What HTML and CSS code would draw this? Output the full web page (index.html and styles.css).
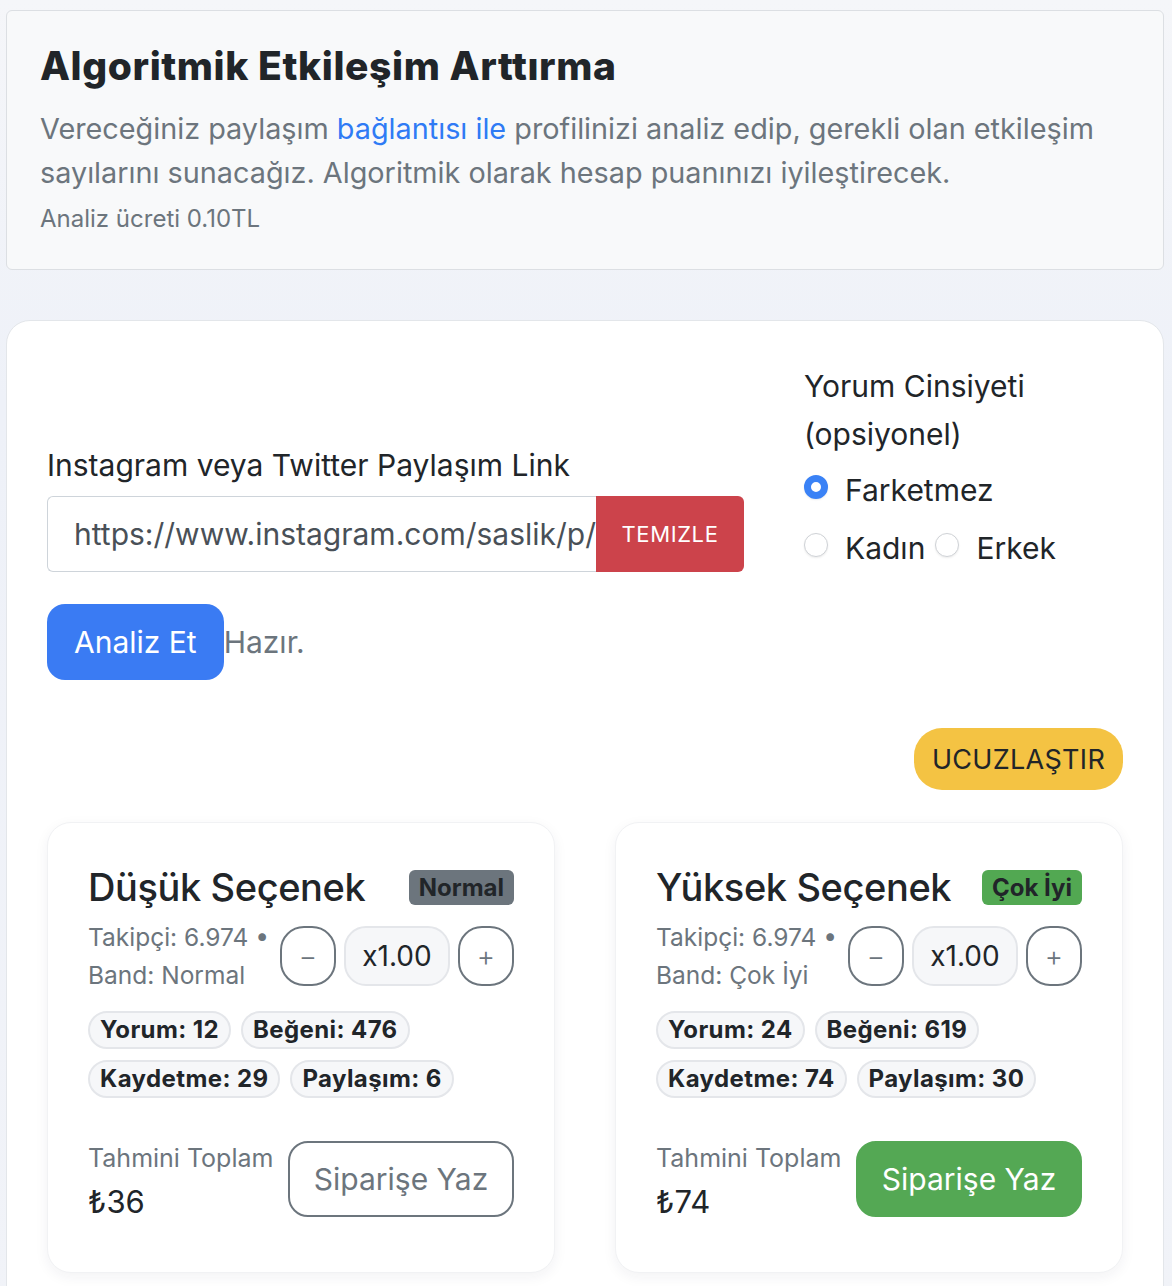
FILE: index.html
```html
<!DOCTYPE html>
<html lang="tr">
<head>
<meta charset="utf-8">
<title>Algoritmik Etkileşim Arttırma</title>
<link rel="stylesheet" href="styles.css">
</head>
<body>
<div class="page">
  <section class="intro">
    <h1 class="intro-title">Algoritmik Etkileşim Arttırma</h1>
    <p class="intro-lead">Vereceğiniz paylaşım <a href="#" class="intro-link">bağlantısı ile</a> profilinizi analiz edip, gerekli olan etkileşim sayılarını sunacağız. Algoritmik olarak hesap puanınızı iyileştirecek.</p>
    <p class="intro-fee">Analiz ücreti 0.10TL</p>
  </section>

  <section class="panel">
    <div class="form-row">
      <div class="link-field">
        <label class="field-label" for="post-link">Instagram veya Twitter Paylaşım Link</label>
        <div class="input-group">
          <input id="post-link" class="link-input" type="text" value="https://www.instagram.com/saslik/p/C3xAmPlE9k2/">
          <button class="btn-clear" type="button">TEMIZLE</button>
        </div>
      </div>
      <fieldset class="gender">
        <legend class="gender-title">Yorum Cinsiyeti (opsiyonel)</legend>
        <div class="radio-line">
          <label class="radio"><input type="radio" name="gender" checked><span>Farketmez</span></label>
        </div>
        <div class="radio-line">
          <label class="radio"><input type="radio" name="gender"><span>Kadın</span></label>
          <label class="radio"><input type="radio" name="gender"><span>Erkek</span></label>
        </div>
      </fieldset>
    </div>

    <div class="action-row">
      <button class="btn-analyze" type="button">Analiz Et</button>
      <span class="status">Hazır.</span>
    </div>

    <div class="discount-row">
      <button class="btn-discount" type="button">UCUZLAŞTIR</button>
    </div>

    <div class="options">
      <article class="option">
        <div class="option-head">
          <h2 class="option-title">Düşük Seçenek</h2>
          <span class="badge badge-normal">Normal</span>
        </div>
        <div class="option-meta">
          <p class="meta-text">Takipçi: 6.974 • Band: Normal</p>
          <div class="stepper">
            <button class="step-btn" type="button">&minus;</button>
            <span class="step-value">x1.00</span>
            <button class="step-btn" type="button">+</button>
          </div>
        </div>
        <ul class="chips">
          <li class="chip">Yorum: 12</li>
          <li class="chip">Beğeni: 476</li>
          <li class="chip">Kaydetme: 29</li>
          <li class="chip">Paylaşım: 6</li>
        </ul>
        <div class="option-foot">
          <div class="total">
            <span class="total-label">Tahmini Toplam</span>
            <span class="total-value">₺36</span>
          </div>
          <button class="btn-order" type="button">Siparişe Yaz</button>
        </div>
      </article>

      <article class="option">
        <div class="option-head">
          <h2 class="option-title">Yüksek Seçenek</h2>
          <span class="badge badge-good">Çok İyi</span>
        </div>
        <div class="option-meta">
          <p class="meta-text">Takipçi: 6.974 • Band: Çok İyi</p>
          <div class="stepper">
            <button class="step-btn" type="button">&minus;</button>
            <span class="step-value">x1.00</span>
            <button class="step-btn" type="button">+</button>
          </div>
        </div>
        <ul class="chips">
          <li class="chip">Yorum: 24</li>
          <li class="chip">Beğeni: 619</li>
          <li class="chip">Kaydetme: 74</li>
          <li class="chip">Paylaşım: 30</li>
        </ul>
        <div class="option-foot">
          <div class="total">
            <span class="total-label">Tahmini Toplam</span>
            <span class="total-value">₺74</span>
          </div>
          <button class="btn-order btn-order-primary" type="button">Siparişe Yaz</button>
        </div>
      </article>
    </div>
  </section>
</div>
</body>
</html>
```

FILE: styles.css
```css
* {
  box-sizing: border-box;
}

html,
body {
  margin: 0;
  padding: 0;
}

body {
  font-family: Inter, "Noto Sans", "DejaVu Sans", sans-serif;
  color: #212529;
  background: linear-gradient(180deg, #f5f6f9 0%, #eef1f8 30%, #f1f3f8 100%);
  min-height: 1286px;
}

.page {
  padding: 10px 8px 0 6px;
  display: flex;
  flex-direction: column;
  gap: 50px;
}

/* ---------- intro box ---------- */
.intro {
  background: #f8f9fa;
  border: 1px solid #dcdfe3;
  border-radius: 6px;
  padding: 32px 33px 35px;
}

.intro-title {
  margin: 0;
  font-size: 39px;
  line-height: 46px;
  font-weight: 800;
  letter-spacing: 0.6px;
  color: #212529;
}

.intro-lead {
  margin: 18px 0 0;
  font-size: 28.8px;
  line-height: 44px;
  color: #6c757d;
}

.intro-link {
  color: #2f7bf5;
  text-decoration: none;
}

.intro-fee {
  margin: 9px 0 0;
  font-size: 24px;
  line-height: 30px;
  color: #6c757d;
}

/* ---------- main panel ---------- */
.panel {
  background: #ffffff;
  border: 1px solid #e3e6ea;
  border-radius: 24px;
  padding: 41px 40px 60px;
}

.form-row {
  display: flex;
  align-items: flex-end;
  gap: 60px;
}

.link-field {
  width: 697px;
  flex: none;
}

.field-label {
  display: block;
  font-size: 30px;
  line-height: 40px;
  margin-bottom: 11px;
  color: #212529;
}

.input-group {
  display: flex;
  height: 76px;
}

.link-input {
  flex: 1;
  min-width: 0;
  height: 76px;
  border: 1px solid #ced4da;
  border-right: none;
  border-radius: 6px 0 0 6px;
  padding: 0 0 0 26px;
  font-family: inherit;
  font-size: 30px;
  color: #495057;
  background: #fff;
  outline: none;
}

.btn-clear {
  flex: none;
  width: 148px;
  border: none;
  border-radius: 0 6px 6px 0;
  background: #cc434b;
  color: #fff;
  font-family: inherit;
  font-size: 22px;
  letter-spacing: 0.6px;
}

.gender {
  border: none;
  margin: 0;
  padding: 0;
  min-width: 0;
}

.gender-title {
  padding: 0;
  font-size: 30px;
  line-height: 48px;
  width: 270px;
  color: #212529;
}

.radio-line {
  display: flex;
  align-items: center;
  gap: 10px;
  height: 48px;
  margin-top: 8px;
}

.radio-line + .radio-line {
  margin-top: 10px;
}

.radio {
  display: flex;
  align-items: center;
  gap: 17px;
  font-size: 30px;
  color: #212529;
}

.radio input {
  appearance: none;
  -webkit-appearance: none;
  margin: 0;
  width: 24px;
  height: 24px;
  border-radius: 50%;
  border: 1px solid #cfd2d6;
  background: #fff;
  box-shadow: 0 1px 2px rgba(0, 0, 0, 0.08);
  position: relative;
  top: -3px;
}

.radio input:checked {
  border: 7px solid #3a82f6;
  background: #fff;
}

/* ---------- actions ---------- */
.action-row {
  display: flex;
  align-items: center;
  margin-top: 32px;
}

.btn-analyze {
  height: 76px;
  padding: 0 27px;
  border: none;
  border-radius: 18px;
  background: #3a7bf3;
  color: #fff;
  font-family: inherit;
  font-size: 30px;
}

.status {
  font-size: 30px;
  color: #6c757d;
}

.discount-row {
  display: flex;
  justify-content: flex-end;
  margin-top: 48px;
}

.btn-discount {
  height: 62px;
  width: 209px;
  border: none;
  border-radius: 28px;
  background: #f4c343;
  color: #212529;
  font-family: inherit;
  font-size: 27px;
  letter-spacing: 0.3px;
}

/* ---------- option cards ---------- */
.options {
  display: grid;
  grid-template-columns: 1fr 1fr;
  gap: 60px;
  margin-top: 32px;
}

.option {
  background: #fff;
  border: 1px solid #f1f2f4;
  border-radius: 24px;
  box-shadow: 0 4px 14px rgba(30, 40, 60, 0.06);
  padding: 40px 40px 50px;
}

.option-head {
  display: flex;
  justify-content: space-between;
  align-items: center;
  height: 48px;
}

.option-title {
  margin: 0;
  font-size: 38px;
  font-weight: 500;
  letter-spacing: -0.4px;
  color: #212529;
}

.badge {
  height: 35px;
  padding: 0 10px;
  border-radius: 6px;
  font-size: 24px;
  font-weight: 700;
  line-height: 35px;
  color: #212529;
}

.badge-normal {
  background: #6c757d;
}

.badge-good {
  background: #52a852;
}

.option-meta {
  display: flex;
  align-items: center;
  gap: 8px;
  margin-top: 7px;
}

.meta-text {
  flex: 1;
  margin: 0;
  font-size: 24.5px;
  line-height: 38px;
  color: #6c757d;
}

.stepper {
  display: flex;
  gap: 8px;
  flex: none;
}

.step-btn {
  width: 56px;
  height: 60px;
  border: 2px solid #6c757d;
  border-radius: 24px;
  background: #fff;
  color: #6c757d;
  font-family: inherit;
  font-size: 28px;
  font-weight: 300;
  padding: 0;
}

.step-value {
  width: 106px;
  height: 60px;
  border: 2px solid #e4e6ea;
  border-radius: 22px;
  background: #f6f7f9;
  display: flex;
  align-items: center;
  justify-content: center;
  font-size: 28px;
  color: #212529;
}

.chips {
  list-style: none;
  margin: 17px 0 0;
  padding: 0;
  display: flex;
  flex-wrap: wrap;
  gap: 11px 10px;
  max-width: 410px;
}

.chip {
  height: 38px;
  padding: 0 10px;
  border: 2px solid #e4e6ea;
  border-radius: 19px;
  background: #f6f7f9;
  font-size: 24px;
  font-weight: 700;
  letter-spacing: 0.4px;
  line-height: 34px;
  color: #212529;
}

.option-foot {
  display: flex;
  justify-content: space-between;
  align-items: flex-start;
  margin-top: 43px;
}

.total {
  display: flex;
  flex-direction: column;
  gap: 7px;
}

.total-label {
  font-size: 25px;
  line-height: 34px;
  color: #6c757d;
}

.total-value {
  font-size: 31px;
  line-height: 40px;
  color: #212529;
}

.btn-order {
  width: 226px;
  height: 76px;
  border: 2px solid #6c757d;
  border-radius: 20px;
  background: #fff;
  color: #6c757d;
  font-family: inherit;
  font-size: 30px;
}

.btn-order-primary {
  border-color: #54a854;
  background: #54a854;
  color: #fff;
}
```
